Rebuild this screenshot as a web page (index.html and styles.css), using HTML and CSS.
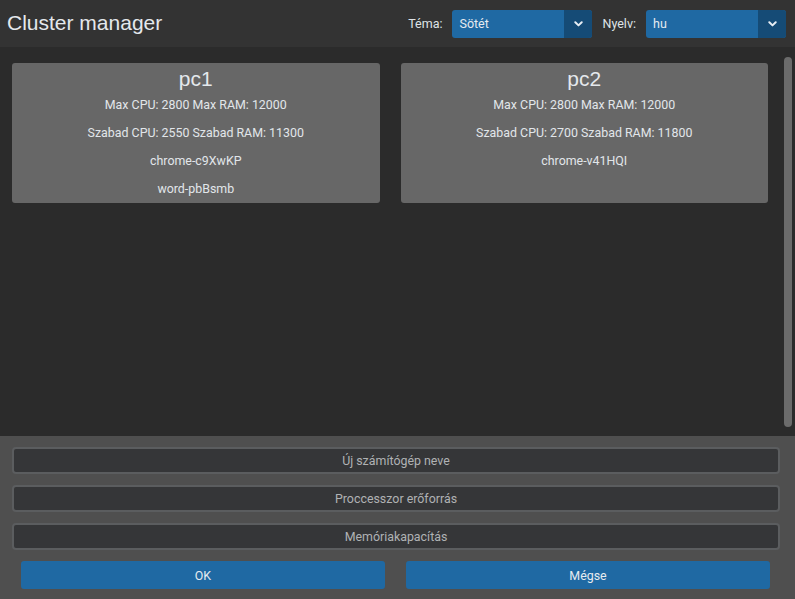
FILE: index.html
```html
<!DOCTYPE html>
<html lang="hu">
<head>
<meta charset="utf-8">
<title>Cluster manager</title>
<link rel="stylesheet" href="styles.css">
</head>
<body>
<div class="app">
  <header class="topbar">
    <h1 class="title">Cluster manager</h1>
    <div class="controls">
      <label class="ctl-label">Téma:</label>
      <div class="select">
        <span class="select-value">Sötét</span>
        <span class="select-arrow"><svg width="9" height="6" viewBox="0 0 9 6"><path d="M1.3 1.3 L4.5 4.4 L7.7 1.3" fill="none" stroke="#e8eef4" stroke-width="2" stroke-linecap="round" stroke-linejoin="round"/></svg></span>
      </div>
      <label class="ctl-label">Nyelv:</label>
      <div class="select">
        <span class="select-value">hu</span>
        <span class="select-arrow"><svg width="9" height="6" viewBox="0 0 9 6"><path d="M1.3 1.3 L4.5 4.4 L7.7 1.3" fill="none" stroke="#e8eef4" stroke-width="2" stroke-linecap="round" stroke-linejoin="round"/></svg></span>
      </div>
    </div>
  </header>

  <main class="main">
    <div class="cards">
      <section class="card">
        <h2 class="card-title">pc1</h2>
        <div class="row">Max CPU: 2800 Max RAM: 12000</div>
        <div class="row">Szabad CPU: 2550 Szabad RAM: 11300</div>
        <div class="row">chrome-c9XwKP</div>
        <div class="row">word-pbBsmb</div>
      </section>
      <section class="card">
        <h2 class="card-title">pc2</h2>
        <div class="row">Max CPU: 2800 Max RAM: 12000</div>
        <div class="row">Szabad CPU: 2700 Szabad RAM: 11800</div>
        <div class="row">chrome-v41HQI</div>
      </section>
    </div>
    <div class="scrollbar"></div>
  </main>

  <footer class="panel">
    <input class="field" type="text" placeholder="Új számítógép neve">
    <input class="field" type="text" placeholder="Proccesszor erőforrás">
    <input class="field" type="text" placeholder="Memóriakapacítás">
    <div class="buttons">
      <button class="btn">OK</button>
      <button class="btn">Mégse</button>
    </div>
  </footer>
</div>
</body>
</html>
```

FILE: styles.css
```css
html, body {
  margin: 0;
  padding: 0;
  height: 100%;
}
body {
  background: #2b2b2b;
  font-family: Roboto, "Liberation Sans", sans-serif;
  color: #dfe3e7;
  overflow: hidden;
}
.app {
  display: flex;
  flex-direction: column;
  height: 599px;
}
.topbar {
  height: 47px;
  flex: 0 0 47px;
  background: #333333;
  display: flex;
  align-items: center;
  justify-content: space-between;
  padding: 0 9px 0 7px;
  box-sizing: border-box;
}
.title {
  margin: 0;
  font-family: "Liberation Sans", Arial, sans-serif;
  font-weight: normal;
  font-size: 21px;
  color: #e4e8ec;
  position: relative;
  top: -1px;
}
.controls {
  display: flex;
  align-items: center;
  gap: 10px;
}
.ctl-label {
  font-size: 12.5px;
  color: #dfe3e7;
}
.select {
  width: 140px;
  height: 28px;
  background: #1f69a3;
  border-radius: 3px;
  display: flex;
  align-items: center;
  overflow: hidden;
  box-sizing: border-box;
}
.select-value {
  flex: 1;
  padding-left: 7px;
  font-size: 12.5px;
  color: #e6ebf0;
}
.select-arrow {
  width: 28px;
  height: 28px;
  background: #154b76;
  display: flex;
  align-items: center;
  justify-content: center;
}
.main {
  flex: 1;
  display: flex;
  min-height: 0;
}
.cards {
  flex: 1;
  padding: 16px 16px 0 12px;
  display: grid;
  grid-template-columns: 1fr 1fr;
  column-gap: 21px;
  align-content: start;
}
.card {
  background: #676767;
  border-radius: 3px;
  text-align: center;
}
.card-title {
  margin: 0;
  padding-top: 4px;
  height: 24px;
  line-height: 24px;
  font-family: "Liberation Sans", Arial, sans-serif;
  font-weight: normal;
  font-size: 21px;
  color: #e4e8ec;
}
.row {
  height: 28px;
  line-height: 28px;
  font-size: 12.4px;
  color: #e2e6ea;
}
.scrollbar {
  width: 8px;
  margin: 10px 3px 9px 0;
  background: #6b6b6b;
  border-radius: 4px;
}
.panel {
  flex: 0 0 163px;
  background: #4f4f4f;
  padding: 11px 15px 10px 12px;
  box-sizing: border-box;
  display: flex;
  flex-direction: column;
  gap: 11px;
}
.field {
  display: block;
  width: 100%;
  height: 27px;
  box-sizing: border-box;
  margin: 0;
  background: #353638;
  border: 2px solid #5b5d5f;
  border-radius: 4px;
  text-align: center;
  font-family: Roboto, "Liberation Sans", sans-serif;
  font-size: 12.4px;
  color: #dfe3e7;
  outline: none;
}
.field::placeholder {
  color: #b0b2b4;
}
.buttons {
  display: flex;
  gap: 21px;
  padding: 0 10px 0 9px;
}
.btn {
  flex: 1;
  height: 28px;
  background: #1f69a3;
  border: none;
  border-radius: 3px;
  font-family: Roboto, "Liberation Sans", sans-serif;
  font-size: 12.4px;
  color: #e6ebf0;
  padding: 0;
}
```
